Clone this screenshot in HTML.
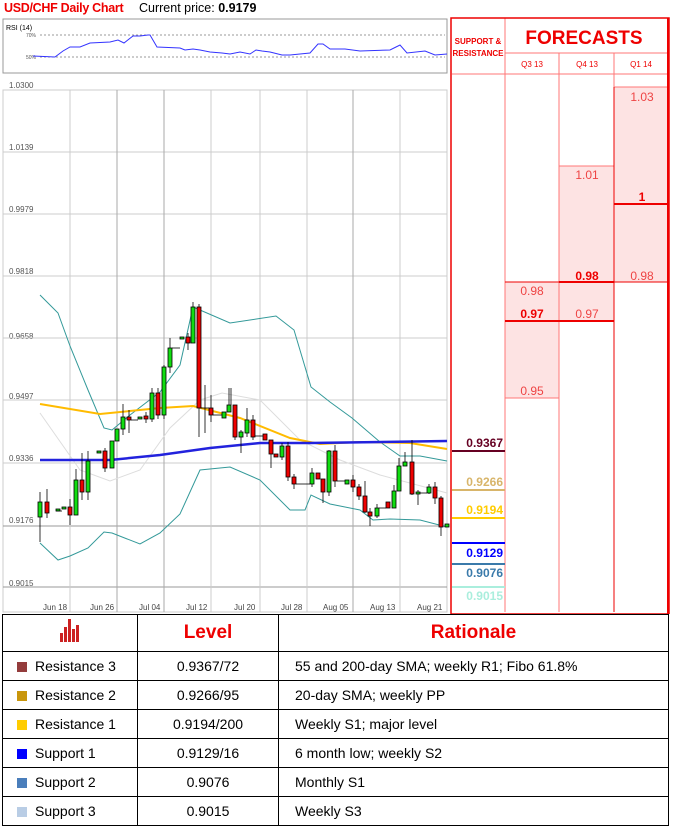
<!DOCTYPE html>
<html><head><meta charset="utf-8"><style>
body{margin:0;width:674px;height:828px;background:#fff;font-family:"Liberation Sans",sans-serif;overflow:hidden;position:relative}
.abs{position:absolute}
table{border-collapse:collapse;position:absolute;left:2px;top:614px;width:667px}
td{border:1.5px solid #000;font-size:14px;height:28px;padding:0}
.c2{text-align:center}
.h{font-size:19px;font-weight:bold;color:#e00;text-align:center;height:36px}
.sq{display:inline-block;width:10px;height:10px;margin:0 8px 0 14px;vertical-align:-1px}
</style></head><body>
<div class="abs" style="left:4px;top:1px;font-size:12.5px;font-weight:bold;color:#e00;letter-spacing:-0.3px">USD/CHF Daily Chart</div>
<div class="abs" style="left:139px;top:1px;font-size:12.5px;color:#000">Current price: <b>0.9179</b></div>
<svg class="abs" style="left:0;top:0" width="674" height="614">
<g font-family="Liberation Sans" font-size="8" fill="#555">
<rect x="3" y="19" width="444" height="54" fill="none" stroke="#999"/>
<text x="6" y="30" font-size="7" fill="#000">RSI (14)</text>
<line x1="40" y1="35" x2="445" y2="35" stroke="#999" stroke-dasharray="2,2"/>
<line x1="40" y1="57" x2="445" y2="57" stroke="#999" stroke-dasharray="2,2"/>
<text x="26" y="37" font-size="5">70%</text><text x="26" y="59" font-size="5">50%</text>
<polyline fill="none" stroke="#33f" stroke-width="1" points="33,56 55,57 63,51 70,47 80,47 90,43 110,42 118,40 124,43 133,36 140,36 148,35 150,35 157,47 180,48 185,50 193,49 200,50 210,52 222,53 230,54 240,52 250,54 256,50 262,51 270,52 282,55 290,55 300,54 310,53 318,44 323,44 330,49 345,49 360,51 390,50 396,47 400,45 407,53 425,51 435,55 447,54"/>
<text x="9" y="88">1.0300</text><text x="9" y="150">1.0139</text><text x="9" y="212">0.9979</text><text x="9" y="274">0.9818</text><text x="9" y="339">0.9658</text><text x="9" y="399">0.9497</text><text x="9" y="461">0.9336</text><text x="9" y="523">0.9176</text><text x="9" y="586">0.9015</text>
<rect x="3" y="90" width="444" height="522" fill="none" stroke="#ccc"/>
<g stroke="#ccc">
<line x1="3" y1="152" x2="447" y2="152"/><line x1="3" y1="214" x2="447" y2="214"/><line x1="3" y1="276" x2="447" y2="276"/><line x1="3" y1="338" x2="447" y2="338"/><line x1="3" y1="400" x2="447" y2="400"/><line x1="3" y1="463" x2="447" y2="463"/><line x1="3" y1="526" x2="447" y2="526" stroke="#999"/><line x1="3" y1="587" x2="447" y2="587" stroke="#999"/>
<line x1="70" y1="90" x2="70" y2="612"/><line x1="117" y1="90" x2="117" y2="612" stroke="#aaa"/><line x1="164" y1="90" x2="164" y2="612" stroke="#aaa"/><line x1="211" y1="90" x2="211" y2="612"/><line x1="260" y1="90" x2="260" y2="612"/><line x1="307" y1="90" x2="307" y2="612"/><line x1="353" y1="90" x2="353" y2="612" stroke="#aaa"/><line x1="400" y1="90" x2="400" y2="612"/>
</g>
<g font-size="8" fill="#444"><text x="43" y="610">Jun 18</text><text x="90" y="610">Jun 26</text><text x="139" y="610">Jul 04</text><text x="186" y="610">Jul 12</text><text x="234" y="610">Jul 20</text><text x="281" y="610">Jul 28</text><text x="323" y="610">Aug 05</text><text x="370" y="610">Aug 13</text><text x="417" y="610">Aug 21</text></g>
<polyline fill="none" stroke="#ddd" points="40,413 80,470 110,481 140,470 170,428 200,400 222,393 260,400 300,440 340,460 380,475 447,493"/>
<polyline fill="none" stroke="#399" points="40,295 58,313 70,346 88,390 104,428 112,430 130,415 160,392 180,365 193,307 230,323 276,316 294,330 311,387 330,402 352,418 380,442 400,456 420,456 447,461"/>
<polyline fill="none" stroke="#399" points="40,543 58,560 70,556 88,548 104,532 112,533 140,544 160,533 180,514 200,470 230,467 260,480 290,510 305,510 311,495 330,504 360,510 373,520 390,519 420,520 447,527"/>
<polyline fill="none" stroke="#fb0" stroke-width="2" points="40,404 100,414 160,408 193,406 240,418 290,438 320,444 360,442 410,443 447,449"/>
<polyline fill="none" stroke="#22d" stroke-width="2.5" points="40,460 110,460 160,455 210,448 260,443 310,443 447,441"/>
<g stroke="#000" stroke-width="0.8">
<line x1="40" y1="492" x2="40" y2="542"/><line x1="47" y1="489" x2="47" y2="518"/><line x1="70" y1="499" x2="70" y2="525"/><line x1="76" y1="469" x2="76" y2="515"/><line x1="82" y1="453" x2="82" y2="500"/><line x1="88" y1="451" x2="88" y2="500"/><line x1="105" y1="448" x2="105" y2="472"/><line x1="123" y1="404" x2="123" y2="435"/><line x1="129" y1="410" x2="129" y2="433"/><line x1="146" y1="412" x2="146" y2="423"/><line x1="152" y1="388" x2="152" y2="422"/><line x1="158" y1="388" x2="158" y2="419"/><line x1="164" y1="365" x2="164" y2="419"/><line x1="170" y1="338" x2="170" y2="373"/><line x1="188" y1="333" x2="188" y2="350"/><line x1="193" y1="302" x2="193" y2="343"/><line x1="199" y1="304" x2="199" y2="437"/><line x1="205" y1="385" x2="205" y2="433"/><line x1="211" y1="395" x2="211" y2="422"/><line x1="229" y1="388" x2="229" y2="412"/><line x1="231" y1="388" x2="231" y2="405"/><line x1="235" y1="405" x2="235" y2="440"/><line x1="241" y1="430" x2="241" y2="453"/><line x1="247" y1="408" x2="247" y2="437"/><line x1="253" y1="415" x2="253" y2="440"/><line x1="271" y1="440" x2="271" y2="468"/><line x1="282" y1="443" x2="282" y2="460"/><line x1="288" y1="442" x2="288" y2="481"/><line x1="294" y1="474" x2="294" y2="489"/><line x1="312" y1="468" x2="312" y2="487"/><line x1="323" y1="479" x2="323" y2="503"/><line x1="329" y1="450" x2="329" y2="496"/><line x1="335" y1="445" x2="335" y2="487"/><line x1="353" y1="475" x2="353" y2="492"/><line x1="359" y1="484" x2="359" y2="500"/><line x1="365" y1="481" x2="365" y2="513"/><line x1="370" y1="508" x2="370" y2="526"/><line x1="377" y1="504" x2="377" y2="518"/><line x1="394" y1="485" x2="394" y2="508"/><line x1="399" y1="458" x2="399" y2="491"/><line x1="405" y1="452" x2="405" y2="466"/><line x1="412" y1="440" x2="412" y2="495"/><line x1="418" y1="490" x2="418" y2="505"/><line x1="429" y1="484" x2="429" y2="494"/><line x1="435" y1="482" x2="435" y2="504"/><line x1="441" y1="496" x2="441" y2="536"/>
<rect x="38" y="502" width="4" height="15" fill="#1d1"/><rect x="45" y="502" width="4" height="11" fill="#e00"/><rect x="56" y="509" width="4" height="2" fill="#1d1"/><rect x="62" y="507" width="4" height="2" fill="#1d1"/><rect x="68" y="507" width="4" height="8" fill="#e00"/><rect x="74" y="480" width="4" height="35" fill="#1d1"/><rect x="80" y="480" width="4" height="12" fill="#e00"/><rect x="86" y="461" width="4" height="31" fill="#1d1"/><rect x="97" y="451" width="4" height="2" fill="#1d1"/><rect x="103" y="451" width="4" height="17" fill="#e00"/><rect x="110" y="441" width="4" height="27" fill="#1d1"/><rect x="115" y="429" width="4" height="12" fill="#1d1"/><rect x="121" y="417" width="4" height="12" fill="#1d1"/><rect x="127" y="417" width="4" height="3" fill="#e00"/><rect x="138" y="417" width="4" height="2" fill="#1d1"/><rect x="144" y="416" width="4" height="3" fill="#e00"/><rect x="150" y="393" width="4" height="26" fill="#1d1"/><rect x="156" y="393" width="4" height="22" fill="#e00"/><rect x="162" y="367" width="4" height="48" fill="#1d1"/><rect x="168" y="348" width="4" height="19" fill="#1d1"/><rect x="180" y="337" width="4" height="2" fill="#1d1"/><rect x="186" y="337" width="4" height="6" fill="#e00"/><rect x="191" y="307" width="4" height="36" fill="#1d1"/><rect x="197" y="307" width="4" height="101" fill="#e00"/><rect x="209" y="408" width="4" height="7" fill="#e00"/><rect x="222" y="412" width="4" height="6" fill="#1d1"/><rect x="227" y="405" width="4" height="7" fill="#1d1"/><rect x="233" y="405" width="4" height="32" fill="#e00"/><rect x="239" y="432" width="4" height="5" fill="#1d1"/><rect x="245" y="420" width="4" height="13" fill="#1d1"/><rect x="251" y="420" width="4" height="17" fill="#e00"/><rect x="263" y="434" width="4" height="6" fill="#e00"/><rect x="269" y="440" width="4" height="14" fill="#e00"/><rect x="274" y="454" width="4" height="3" fill="#e00"/><rect x="280" y="446" width="4" height="11" fill="#1d1"/><rect x="286" y="446" width="4" height="31" fill="#e00"/><rect x="292" y="477" width="4" height="7" fill="#e00"/><rect x="310" y="473" width="4" height="11" fill="#1d1"/><rect x="316" y="473" width="4" height="6" fill="#e00"/><rect x="321" y="479" width="4" height="13" fill="#e00"/><rect x="327" y="451" width="4" height="41" fill="#1d1"/><rect x="333" y="451" width="4" height="30" fill="#e00"/><rect x="345" y="480" width="4" height="4" fill="#1d1"/><rect x="351" y="480" width="4" height="7" fill="#e00"/><rect x="357" y="487" width="4" height="9" fill="#e00"/><rect x="363" y="496" width="4" height="16" fill="#e00"/><rect x="368" y="512" width="4" height="4" fill="#e00"/><rect x="375" y="508" width="4" height="8" fill="#1d1"/><rect x="386" y="502" width="4" height="6" fill="#e00"/><rect x="392" y="491" width="4" height="17" fill="#1d1"/><rect x="397" y="466" width="4" height="25" fill="#1d1"/><rect x="403" y="462" width="4" height="4" fill="#1d1"/><rect x="410" y="462" width="4" height="32" fill="#e00"/><rect x="416" y="492" width="4" height="2" fill="#1d1"/><rect x="427" y="487" width="4" height="6" fill="#1d1"/><rect x="433" y="487" width="4" height="11" fill="#e00"/><rect x="439" y="498" width="4" height="29" fill="#e00"/><rect x="445" y="524" width="4" height="3" fill="#1d1"/>
<line x1="56" y1="511" x2="62" y2="511"/><line x1="131" y1="420" x2="138" y2="420"/><line x1="172" y1="348" x2="180" y2="348"/><line x1="201" y1="408" x2="209" y2="408"/><line x1="213" y1="415" x2="222" y2="415"/><line x1="255" y1="436" x2="263" y2="436"/><line x1="296" y1="484" x2="310" y2="484"/><line x1="337" y1="481" x2="345" y2="481"/><line x1="379" y1="508" x2="386" y2="508"/><line x1="420" y1="493" x2="427" y2="493"/>
</g>
</g>
<g font-family="Liberation Sans">
<rect x="505" y="282" width="54" height="116" fill="#fde3e3"/><rect x="559" y="166" width="55" height="155" fill="#fde3e3"/><rect x="614" y="87" width="54" height="195" fill="#fde3e3"/>
<g stroke="#f77" stroke-width="1">
<line x1="505" y1="18" x2="505" y2="612"/><line x1="559" y1="53" x2="559" y2="612"/><line x1="614" y1="53" x2="614" y2="612"/><line x1="505" y1="53" x2="668" y2="53"/><line x1="452" y1="74" x2="668" y2="74"/>
<line x1="505" y1="398" x2="559" y2="398"/><line x1="559" y1="166" x2="614" y2="166"/><line x1="614" y1="87" x2="668" y2="87"/>
</g>
<g stroke="#e00">
<line x1="505" y1="282" x2="668" y2="282"/><line x1="505" y1="321" x2="614" y2="321" stroke-width="2"/><line x1="614" y1="204" x2="668" y2="204" stroke-width="2"/><line x1="559" y1="282" x2="614" y2="282" stroke-width="2"/><line x1="614" y1="87" x2="614" y2="612"/>
</g>
<rect x="451" y="18" width="218" height="596" fill="none" stroke="#e00" stroke-width="1.5"/>
<line x1="668" y1="18" x2="668" y2="614" stroke="#e00" stroke-width="2"/>
<text x="478" y="44" font-size="8" font-weight="bold" fill="#e00" text-anchor="middle">SUPPORT &amp;</text>
<text x="478" y="56" font-size="8" font-weight="bold" fill="#e00" text-anchor="middle">RESISTANCE</text>
<text x="584" y="44" font-size="19" font-weight="bold" fill="#e00" text-anchor="middle">FORECASTS</text>
<text x="532" y="67" font-size="8" fill="#e00" text-anchor="middle">Q3 13</text><text x="587" y="67" font-size="8" fill="#e00" text-anchor="middle">Q4 13</text><text x="641" y="67" font-size="8" fill="#e00" text-anchor="middle">Q1 14</text>
<g font-size="12" fill="#e44" text-anchor="middle">
<text x="642" y="101">1.03</text><text x="642" y="201" font-weight="bold" fill="#e00">1</text><text x="642" y="280">0.98</text>
<text x="587" y="179">1.01</text><text x="587" y="280" font-weight="bold" fill="#e00">0.98</text><text x="587" y="318">0.97</text>
<text x="532" y="295">0.98</text><text x="532" y="318" font-weight="bold" fill="#e00">0.97</text><text x="532" y="395">0.95</text>
</g>
<g font-size="12" font-weight="bold" text-anchor="end">
<line x1="452" y1="451" x2="505" y2="451" stroke="#602" stroke-width="2"/><text x="503" y="447" fill="#602">0.9367</text>
<line x1="452" y1="490" x2="505" y2="490" stroke="#d8b56a" stroke-width="2"/><text x="503" y="486" fill="#d8b56a">0.9266</text>
<line x1="452" y1="518" x2="505" y2="518" stroke="#fc0" stroke-width="2"/><text x="503" y="514" fill="#fc0">0.9194</text>
<line x1="452" y1="543" x2="505" y2="543" stroke="#00f" stroke-width="2"/><text x="503" y="557" fill="#00f">0.9129</text>
<line x1="452" y1="564" x2="505" y2="564" stroke="#3a7aaa" stroke-width="2"/><text x="503" y="577" fill="#3a7aaa">0.9076</text>
<line x1="452" y1="587" x2="505" y2="587" stroke="#aed" stroke-width="2"/><text x="503" y="600" fill="#aed">0.9015</text>
</g>
</g>
</svg>
<table>
<tr><td class="h" style="width:134px"><svg width="26" height="26" viewBox="0 0 26 26"><rect x="3" y="16" width="3" height="9" fill="#c22"/><rect x="7" y="10" width="3" height="15" fill="#c22"/><rect x="11" y="2" width="3" height="23" fill="#c22"/><rect x="15" y="12" width="3" height="13" fill="#c22"/><rect x="19" y="8" width="3" height="17" fill="#c22"/></svg></td><td class="h" style="width:140px">Level</td><td class="h">Rationale</td></tr>
<tr><td><span class="sq" style="background:#943c3c"></span>Resistance 3</td><td class="c2">0.9367/72</td><td style="padding-left:16px">55 and 200-day SMA; weekly R1; Fibo 61.8%</td></tr>
<tr><td><span class="sq" style="background:#c9960c"></span>Resistance 2</td><td class="c2">0.9266/95</td><td style="padding-left:16px">20-day SMA; weekly PP</td></tr>
<tr><td><span class="sq" style="background:#fc0"></span>Resistance 1</td><td class="c2">0.9194/200</td><td style="padding-left:16px">Weekly S1; major level</td></tr>
<tr><td><span class="sq" style="background:#00f"></span>Support 1</td><td class="c2">0.9129/16</td><td style="padding-left:16px">6 month low; weekly S2</td></tr>
<tr><td><span class="sq" style="background:#4a7ebb"></span>Support 2</td><td class="c2">0.9076</td><td style="padding-left:16px">Monthly S1</td></tr>
<tr><td><span class="sq" style="background:#b9cde5"></span>Support 3</td><td class="c2">0.9015</td><td style="padding-left:16px">Weekly S3</td></tr>
</table>
</body></html>
